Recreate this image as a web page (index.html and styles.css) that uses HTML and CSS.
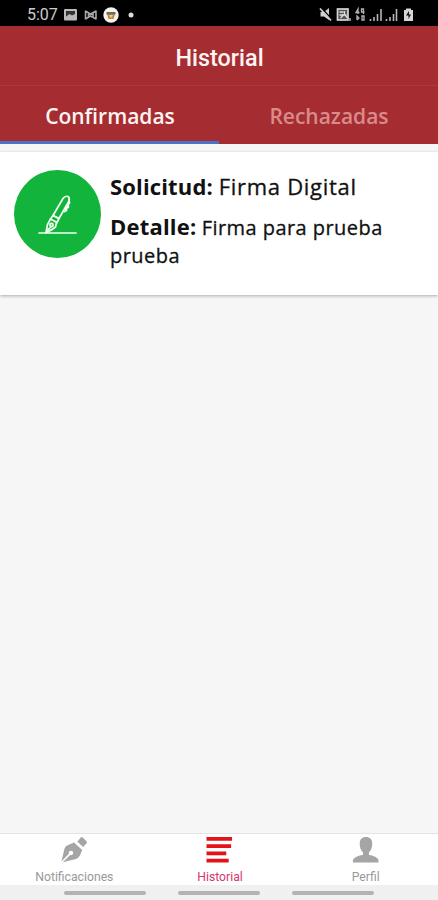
FILE: index.html
```html
<!DOCTYPE html>
<html lang="es">
<head>
<meta charset="utf-8">
<meta name="viewport" content="width=device-width, initial-scale=1">
<title>Historial</title>
<link rel="stylesheet" href="styles.css">
</head>
<body>
<div class="app">
  <div class="status">
    <span class="clock">5:07</span>
    <svg class="left-icons" width="72" height="18" viewBox="0 0 72 18">
      <rect x="1" y="3" width="13" height="11.5" rx="1" fill="#b9b9b9"/>
      <path d="M3 5h9v3L9 9.500 6.500 8 3 10.500z" fill="#333"/>
      <path d="M22.500 4.500v9M33 4.500v9M22.500 5l5 3 5.500-3M22.500 13l5-3 5.500 3M25.500 7v4M30 7v4" fill="none" stroke="#a5a5a5" stroke-width="1.600"/>
      <circle cx="48" cy="9" r="7.700" fill="#f4f4f0"/>
      <path d="M44 8h8l-1.500 5h-5z" fill="#c98542"/>
      <path d="M43.500 6h9v2.500h-9z" fill="#66705a"/>
      <path d="M46 9h4l-2 3z" fill="#f2d477"/>
      <circle cx="68" cy="9" r="2.500" fill="#ddd"/>
    </svg>
    <svg class="right-icons" width="98" height="18" viewBox="0 0 98 18">
      <path d="M2.500 6H6L11 2v12L6 10.500H2.500z" fill="#d0d0d0"/>
      <path d="M3 1.500l11 12" stroke="#000" stroke-width="1.500"/>
      <path d="M2 2.500l11 12" stroke="#d0d0d0" stroke-width="1.800"/>
      <rect x="19.500" y="3" width="10.500" height="11" fill="#555" stroke="#d6d6d6" stroke-width="1.700"/>
      <path d="M21.500 6h4M21.500 9h7M22.500 12l4-4 3 4M26.500 5v3" stroke="#ddd" stroke-width="1.300" fill="none"/>
      <path d="M32 12v3" stroke="#bbb" stroke-width="1.500"/>
      <path d="M40 8V3L38 6.500h3.500M45.500 8V3h-2v3h3M39 14v-4l2 2-2 2M44 14v-4h2v4z" fill="none" stroke="#b4b4b4" stroke-width="1.300"/>
      <path d="M52.500 13v2M56 11v4M59.500 8v7M63 3v12M68.500 13v2M72 11v4M75.500 8v7M78.500 3v12" stroke="#b5b5b5" stroke-width="1.600"/>
      <path d="M86 4h2V2.500h5V4h2v11h-9z" fill="#d6d6d6"/>
      <path d="M91 5l-3 4.500h2.500v3.500l2.500-4.500h-2z" fill="#111"/>
    </svg>
  </div>
  <header class="header"><h1>Historial</h1></header>
  <div class="tabs">
    <div class="tab active"><span>Confirmadas</span></div>
    <div class="tab"><span>Rechazadas</span></div>
  </div>
  <main class="content">
    <article class="card">
      <div class="avatar">
        <svg width="60" height="60" viewBox="0 0 60 60" fill="none" stroke="#f2fff2" stroke-width="1.700" stroke-linecap="round" stroke-linejoin="round">
          <path d="M11 49H48"/>
          <path d="M25 31.500L35 14.500Q37 11.500 40 12.500Q42 14 41 17L31 34.500z"/>
          <path d="M41 16l.5 3-1.500 2 .5 2-2 1.500 0 2-2 1M40 20l-3 5"/>
          <path d="M25 31.500l6 3-2 4-6.500-3.500z"/>
          <path d="M22.500 35L19.500 40.500 18 48.500Q24 46 27.500 43L28.500 38.500"/>
          <path d="M18 48.500l5-6M20 45v3"/>
          <circle cx="23.500" cy="41" r="1.600"/>
        </svg>
      </div>
      <div class="text">
        <p class="request"><b>Solicitud:</b> <span>Firma Digital</span></p>
        <p class="detail"><b>Detalle:</b> <span>Firma para prueba prueba</span></p>
      </div>
    </article>
  </main>
  <nav class="bottom">
    <div class="item">
      <svg width="30" height="28" viewBox="0 0 30 28" fill="#a5a5a5">
        <path fill-rule="evenodd" d="M2 26.500L5 13.500Q6 10 9 9.300L15 6.800 23.500 14.500 21 20.500Q19.500 23 17 23.800L3.300 27.300 11 19.700A2.300 2.300 0 1 0 9.700 18.400z"/>
        <path d="M18.500 6L22 1.500Q23 .8 24 1.500L28 5.500Q28.700 6.500 28 7.500L24.500 11.500z"/>
      </svg>
      <span class="label">Notificaciones</span>
    </div>
    <div class="item current">
      <svg width="30" height="28" viewBox="0 0 30 28" fill="#e51218">
        <path d="M1 1h26.500v4H1zM1 8.500h25.500v4H1zM1 16h20.500v4H1zM1 23.500h23v4H1z"/>
      </svg>
      <span class="label">Historial</span>
    </div>
    <div class="item">
      <svg width="30" height="28" viewBox="0 0 30 28" fill="#a5a5a5">
        <path d="M16 1C12 1 9.500 3.500 9.500 7.500Q9.500 14 13 17V19.500Q3.500 21.500 2.500 25V27.500H29V25Q28 21.500 19 19.500V17Q22.500 14 22.500 7.500C22.500 3.500 20 1 16 1z"/>
      </svg>
      <span class="label">Perfil</span>
    </div>
  </nav>
  <div class="gestures"><i></i><i></i><i></i></div>
</div>
</body>
</html>
```
FILE: styles.css
```css
* { box-sizing: border-box; }
body { margin: 0; background: #f6f6f6; }
.app {
  display: flex;
  flex-direction: column;
  width: 438px;
  height: 900px;
  overflow: hidden;
  font-family: "Open Sans", "Noto Sans", sans-serif;
}
.status {
  display: flex;
  align-items: center;
  height: 26px;
  padding: 3px 22px 0 27px;
  background: #000;
  color: #ccc;
  flex: none;
}
.clock { width: 36px; font: 16px/20px Roboto, sans-serif; }
.right-icons { margin-left: auto; }
.header {
  display: flex;
  align-items: center;
  justify-content: center;
  flex: none;
  height: 60px;
  padding: 4px 0 0 1px;
  background: #a52d32;
  border-bottom: 1px solid #b0383c;
}
.header h1 { margin: 0; color: #fff4f2; font: 500 23.400px/28px Roboto, sans-serif; }
.tabs { display: flex; flex: none; height: 58px; background: #a52d32; }
.tab {
  display: flex;
  flex: 1;
  align-items: center;
  justify-content: center;
  padding: 4px 0 0 1px;
  color: #d98b8b;
  border-bottom: 3px solid transparent;
  font-size: 21px;
  font-weight: 600;
}
.tab.active { color: #fff4f2; border-bottom-color: #4a72c8; }
.content { flex: 1; padding-top: 8px; background: #f6f6f6; }
.card {
  display: flex;
  height: 143px;
  padding: 18px 14px 0;
  background: #fff;
  box-shadow: 0 1px 3px rgba(0, 0, 0, .3);
}
.avatar {
  display: flex;
  align-items: center;
  justify-content: center;
  flex: none;
  width: 87px;
  height: 88px;
  border-radius: 50%;
  background: #12b43c;
}
.text { margin-left: 9px; color: #111; }
.text p { margin: 0; }
.text b { font-weight: 700; }
.text span { -webkit-text-stroke: .3px #111; }
.text .request { font-size: 22px; line-height: 33px; letter-spacing: .15px; }
.request span { letter-spacing: .7px; }
.text .detail { margin-top: 9px; font-size: 20px; line-height: 28px; }
.detail b { font-size: 22px; line-height: 28px; letter-spacing: .2px; }
.detail span { letter-spacing: .45px; }
.bottom {
  display: flex;
  flex: none;
  height: 52px;
  padding: 2px 0 0 1px;
  background: #fff;
  border-top: 1px solid #e4e4e4;
}
.item { display: flex; flex: 1; flex-direction: column; align-items: center; }
.label { margin-top: 6px; margin-left: 1px; color: #999; font: 12.200px/16px Roboto, sans-serif; }
.current .label { color: #d3386e; }
.gestures {
  display: flex;
  justify-content: center;
  flex: none;
  gap: 32px;
  height: 15px;
  padding-top: 6px;
  background: #f0f0f0;
}
.gestures i { width: 82px; height: 4px; border-radius: 2px; background: #b3b3b3; }
```
